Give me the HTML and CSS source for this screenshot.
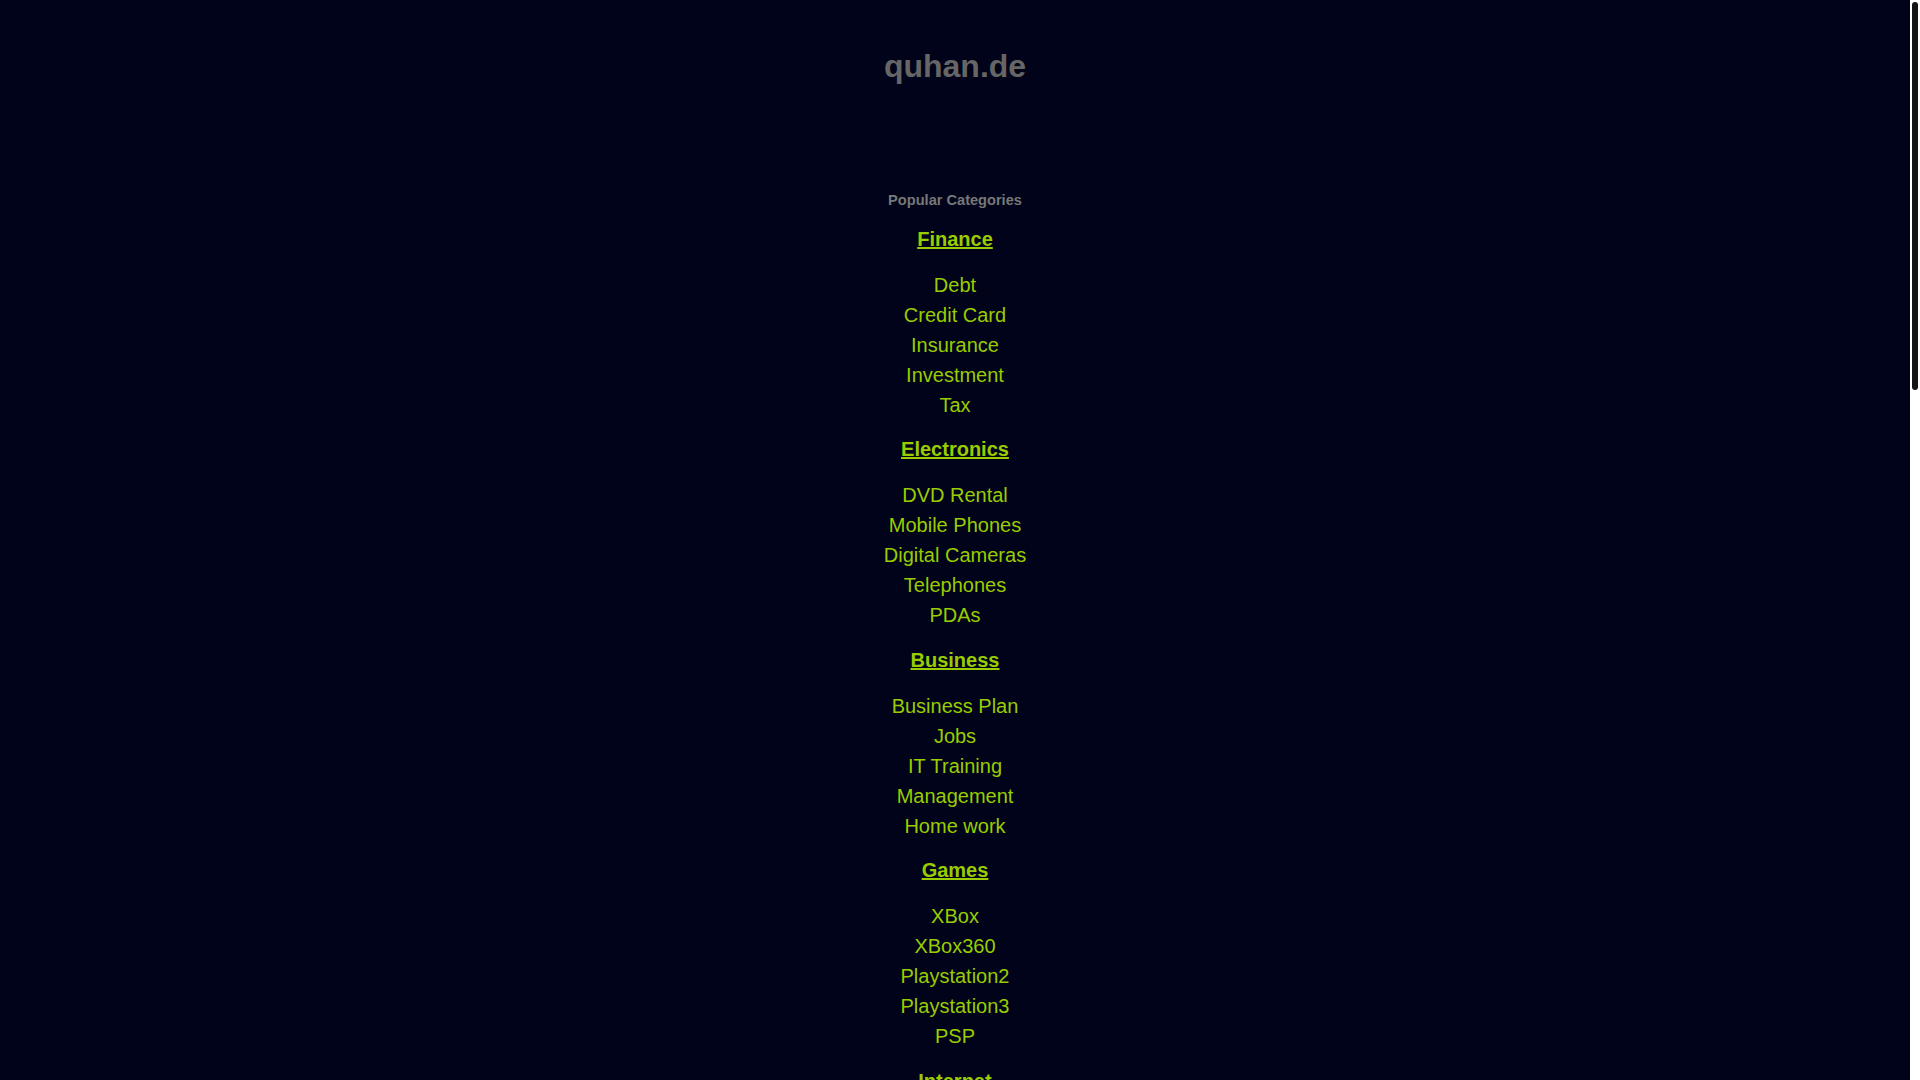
FILE: index.html
```html
<!DOCTYPE html>
<html lang="en">
<head>
<meta charset="utf-8">
<title>quhan.de</title>
<link rel="stylesheet" href="styles.css">
</head>
<body>
<div class="viewport">
<div class="scroller">
<div class="page">
  <header class="header">
    <h1 class="site-title">quhan.de</h1>
  </header>
  <main class="categories">
    <h2 class="popular">Popular Categories</h2>

    <section class="cat">
      <a class="cat-title" href="#">Finance</a>
      <ul class="cat-list">
        <li><a href="#">Debt</a></li>
        <li><a href="#">Credit Card</a></li>
        <li><a href="#">Insurance</a></li>
        <li><a href="#">Investment</a></li>
        <li><a href="#">Tax</a></li>
      </ul>
    </section>

    <section class="cat">
      <a class="cat-title" href="#">Electronics</a>
      <ul class="cat-list">
        <li><a href="#">DVD Rental</a></li>
        <li><a href="#">Mobile Phones</a></li>
        <li><a href="#">Digital Cameras</a></li>
        <li><a href="#">Telephones</a></li>
        <li><a href="#">PDAs</a></li>
      </ul>
    </section>

    <section class="cat">
      <a class="cat-title" href="#">Business</a>
      <ul class="cat-list">
        <li><a href="#">Business Plan</a></li>
        <li><a href="#">Jobs</a></li>
        <li><a href="#">IT Training</a></li>
        <li><a href="#">Management</a></li>
        <li><a href="#">Home work</a></li>
      </ul>
    </section>

    <section class="cat">
      <a class="cat-title" href="#">Games</a>
      <ul class="cat-list">
        <li><a href="#">XBox</a></li>
        <li><a href="#">XBox360</a></li>
        <li><a href="#">Playstation2</a></li>
        <li><a href="#">Playstation3</a></li>
        <li><a href="#">PSP</a></li>
      </ul>
    </section>

    <section class="cat">
      <a class="cat-title" href="#">Internet</a>
      <ul class="cat-list">
        <li><a href="#">Web Hosting</a></li>
        <li><a href="#">Domain Names</a></li>
        <li><a href="#">Broadband</a></li>
        <li><a href="#">Web Design</a></li>
        <li><a href="#">Email</a></li>
      </ul>
    </section>

    <section class="cat">
      <a class="cat-title" href="#">Travel</a>
      <ul class="cat-list">
        <li><a href="#">Hotels</a></li>
        <li><a href="#">Flights</a></li>
        <li><a href="#">Car Rental</a></li>
        <li><a href="#">Cruises</a></li>
        <li><a href="#">Vacation</a></li>
      </ul>
    </section>

    <section class="cat">
      <a class="cat-title" href="#">Shopping</a>
      <ul class="cat-list">
        <li><a href="#">Fashion</a></li>
        <li><a href="#">Jewelry</a></li>
        <li><a href="#">Gifts</a></li>
        <li><a href="#">Shoes</a></li>
        <li><a href="#">Watches</a></li>
      </ul>
    </section>

    <section class="cat">
      <a class="cat-title" href="#">Health</a>
      <ul class="cat-list">
        <li><a href="#">Fitness</a></li>
        <li><a href="#">Diet</a></li>
        <li><a href="#">Nutrition</a></li>
        <li><a href="#">Beauty</a></li>
        <li><a href="#">Dental</a></li>
      </ul>
    </section>

    <section class="cat">
      <a class="cat-title" href="#">Education</a>
      <ul class="cat-list">
        <li><a href="#">Online Degree</a></li>
        <li><a href="#">Colleges</a></li>
        <li><a href="#">Languages</a></li>
        <li><a href="#">Scholarships</a></li>
        <li><a href="#">Distance Learning</a></li>
      </ul>
    </section>

    <section class="cat">
      <a class="cat-title" href="#">Automotive</a>
      <ul class="cat-list">
        <li><a href="#">New Cars</a></li>
        <li><a href="#">Used Cars</a></li>
        <li><a href="#">Car Insurance</a></li>
        <li><a href="#">Auto Parts</a></li>
        <li><a href="#">Motorcycles</a></li>
      </ul>
    </section>

    <section class="cat">
      <a class="cat-title" href="#">Home &amp; Garden</a>
      <ul class="cat-list">
        <li><a href="#">Furniture</a></li>
        <li><a href="#">Real Estate</a></li>
        <li><a href="#">Mortgage</a></li>
        <li><a href="#">Gardening</a></li>
        <li><a href="#">Home Improvement</a></li>
      </ul>
    </section>

    <section class="cat">
      <a class="cat-title" href="#">Entertainment</a>
      <ul class="cat-list">
        <li><a href="#">Movies</a></li>
        <li><a href="#">Music</a></li>
        <li><a href="#">Concerts</a></li>
        <li><a href="#">Books</a></li>
        <li><a href="#">Television</a></li>
      </ul>
    </section>

    <section class="cat">
      <a class="cat-title" href="#">Sports</a>
      <ul class="cat-list">
        <li><a href="#">Football</a></li>
        <li><a href="#">Golf</a></li>
        <li><a href="#">Tennis</a></li>
        <li><a href="#">Fishing</a></li>
        <li><a href="#">Outdoor</a></li>
      </ul>
    </section>
  </main>
  <footer class="footer">
    <p>&copy; quhan.de</p>
  </footer>
</div>
</div>
<div class="scrollbar" aria-hidden="true">
  <div class="scrollbar-thumb"></div>
</div>
</div>
</body>
</html>
```

FILE: styles.css
```css
html,
body {
  margin: 0;
  height: 100%;
  overflow: hidden;
  background: #00031a;
}

body {
  font-family: "Liberation Sans", Arial, sans-serif;
  color: #99cc00;
}

.viewport {
  display: flex;
  height: 100vh;
}

.scroller {
  flex: 1;
  min-width: 0;
  height: 100vh;
  overflow: hidden;
  background: #00031a;
}

.scrollbar {
  width: 10px;
  flex: 0 0 10px;
  background: #ffffff;
  padding: 2px 2px 0;
  box-sizing: border-box;
}

.scrollbar-thumb {
  height: 388px;
  background: #141414;
  border-radius: 3px;
}

.page {
  display: flex;
  flex-direction: column;
  align-items: center;
  text-align: center;
}

.header {
  padding-top: 46px;
}

.site-title {
  margin: 0;
  font-size: 32px;
  line-height: 40px;
  font-weight: bold;
  color: #666666;
}

.categories {
  margin-top: 104px;
  display: flex;
  flex-direction: column;
  align-items: center;
}

.popular {
  margin: 0 0 14px;
  font-size: 14.6px;
  line-height: 20px;
  font-weight: bold;
  color: #777777;
}

.cat {
  display: flex;
  flex-direction: column;
  align-items: center;
}

.cat-title {
  font-size: 20px;
  line-height: 30px;
  font-weight: bold;
  color: #99cc00;
  text-decoration: underline;
}

.cat-list {
  list-style: none;
  margin: 16px 0 14.4px;
  padding: 0;
}

.cat-list li {
  font-size: 20px;
  line-height: 30px;
}

.cat-list a {
  color: #99cc00;
  text-decoration: none;
}

.footer {
  padding: 20px 0 40px;
  font-size: 13px;
  color: #666666;
}

.footer p {
  margin: 0;
}
```
